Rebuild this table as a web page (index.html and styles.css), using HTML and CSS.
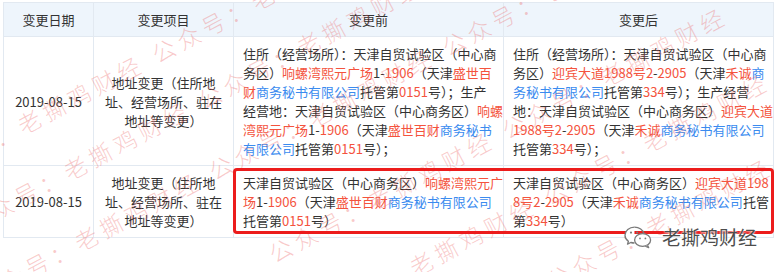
FILE: index.html
```html
<!DOCTYPE html>
<html lang="zh-CN">
<head>
<meta charset="utf-8">
<title>变更记录</title>
<link rel="stylesheet" href="styles.css">
</head>
<body>
<div class="page">
  <table class="chg">
    <colgroup>
      <col class="c1"><col class="c2"><col class="c3"><col class="c4">
    </colgroup>
    <thead>
      <tr><th>变更日期</th><th>变更项目</th><th>变更前</th><th>变更后</th></tr>
    </thead>
    <tbody>
      <tr class="row-a">
        <td class="mid">2019-08-15</td>
        <td class="mid">地址变更（住所地<br>址、经营场所、驻在<br>地址等变更）</td>
        <td class="txt">住所（经营场所）：天津自贸试验区（中心商<br>务区）<span class="r">响螺湾熙元广场</span>1-<span class="r">1906</span>（天津<span class="r">盛世百</span><br><span class="r">财</span><span class="b">商务秘书有限公司</span>托管第<span class="r">0151</span>号）；生产<br>经营地：天津自贸试验区（中心商务区）<span class="r">响螺</span><br><span class="r">湾熙元广场</span>1-<span class="r">1906</span>（天津<span class="r">盛世百财</span><span class="b">商务秘书</span><br><span class="b">有限公司</span>托管第<span class="r">0151</span>号）；</td>
        <td class="txt">住所（经营场所）：天津自贸试验区（中心商<br>务区）<span class="r">迎宾大道1988号2</span>-<span class="r">2905</span>（天津<span class="r">禾诚</span><span class="b">商</span><br><span class="b">务秘书有限公司</span>托管第<span class="r">334</span>号）；生产经营<br>地：天津自贸试验区（中心商务区）<span class="r">迎宾大道</span><br><span class="r">1988号2</span>-<span class="r">2905</span>（天津<span class="r">禾诚</span><span class="b">商务秘书有限公司</span><br>托管第<span class="r">334</span>号）；</td>
      </tr>
      <tr class="row-b">
        <td class="mid">2019-08-15</td>
        <td class="mid">地址变更（住所地<br>址、经营场所、驻在<br>地址等变更）</td>
        <td class="txt">天津自贸试验区（中心商务区）<span class="r">响螺湾熙元广</span><br><span class="r">场</span>1-<span class="r">1906</span>（天津<span class="r">盛世百财</span><span class="b">商务秘书有限公司</span><br>托管第<span class="r">0151</span>号）</td>
        <td class="txt">天津自贸试验区（中心商务区）<span class="r">迎宾大道198</span><br><span class="r">8号2</span>-<span class="r">2905</span>（天津<span class="r">禾诚</span><span class="b">商务秘书有限公司</span>托管<br>第<span class="r">334</span>号）</td>
      </tr>
    </tbody>
  </table>

  <div class="wm" aria-hidden="true">
    <span class="wl wl1"><span>公众号：老撕鸡财经</span><span>公众号：老撕鸡财经</span></span>
    <span class="wl wl2"><span>公众号：老撕鸡财经</span><span>公众号：老撕鸡财经</span></span>
    <span class="wl wl3"><span>公众号：老撕鸡财经</span><span>公众号：老撕鸡财经</span><span>公众号：老撕鸡财经</span></span>
    <span class="wl wl4"><span>公众号：老撕鸡财经</span><span>公众号：老撕鸡财经</span></span>
    <span class="wl wl5"><span>公众号：老撕鸡财经</span><span>公众号：老撕鸡财经</span></span>
    <span class="wl wl6"><span>公众号：老撕鸡财经</span></span>
  </div>

  <div class="hl-box"></div>

  <div class="brand">
    <svg class="wx" width="30" height="24" viewBox="0 0 30 24" aria-hidden="true">
      <path d="M11.5 2.2C6.2 2.2 2 5.8 2 10.2c0 2.5 1.3 4.6 3.4 6.1l-.9 2.9 3.3-1.7c1.1.3 2.3.5 3.6.5" fill="#fff" stroke="#7a7a7a" stroke-width="1.3" stroke-linejoin="round"/>
      <path d="M21 8.6c-.9-3.7-4.8-6.4-9.5-6.4" fill="none" stroke="#7a7a7a" stroke-width="1.3"/>
      <ellipse cx="19.6" cy="15" rx="8" ry="6.4" fill="#fff" stroke="#7a7a7a" stroke-width="1.3"/>
      <path d="M24.5 20.2l1.2 2.4-3.4-1.4" fill="#fff" stroke="#7a7a7a" stroke-width="1.2" stroke-linejoin="round"/>
      <circle cx="8" cy="7.6" r="1.1" fill="#7a7a7a"/>
      <circle cx="14.2" cy="7.6" r="1.1" fill="#7a7a7a"/>
      <circle cx="17" cy="13.4" r="0.9" fill="#7a7a7a"/>
      <circle cx="22.4" cy="13.4" r="0.9" fill="#7a7a7a"/>
    </svg>
    <span class="brand-name">老撕鸡财经</span>
  </div>
</div>
</body>
</html>
```
FILE: styles.css
```css
html, body {
  margin: 0;
  padding: 0;
  background: #fff;
}

.page {
  position: relative;
  width: 779px;
  height: 272px;
  overflow: hidden;
  box-sizing: border-box;
  padding: 2px 0 0 3px;
  font-family: "Noto Sans CJK SC", "Liberation Sans", sans-serif;
  font-size: 13px;
  color: #333;
}

.chg {
  border-collapse: collapse;
  table-layout: fixed;
  width: 770px;
}

.chg .c1 { width: 90px; }
.chg .c2 { width: 140px; }
.chg .c3 { width: 270px; }
.chg .c4 { width: 270px; }

.chg th,
.chg td {
  border: 1px solid #e2e9f1;
  font-weight: normal;
}

.chg th {
  background: #eef5fc;
  height: 33px;
  padding: 0;
  text-align: center;
  line-height: 19px;
}

.chg td {
  padding: 7px 8px 7px 9px;
  line-height: 19px;
  vertical-align: top;
  white-space: nowrap;
}

.chg td.mid {
  text-align: center;
  vertical-align: middle;
  padding-left: 4px;
  padding-right: 4px;
}

.r { color: #f4533d; }
.b { color: #3a8bef; }

/* watermark overlay */
.wm {
  position: absolute;
  inset: 0;
  pointer-events: none;
}

.wl {
  position: absolute;
  white-space: nowrap;
  font-size: 23px;
  font-weight: 300;
  line-height: 26px;
  letter-spacing: 5px;
  color: rgba(236, 100, 100, 0.34);
  transform: rotate(-28deg);
  transform-origin: 0 50%;
}

.wl > span {
  margin-right: 12px;
}

.wl1 { left: -80px; top: 166px; }
.wl2 { left: -34px; top: 212px; }
.wl3 { left: -23px; top: 283px; }
.wl4 { left: 270px; top: 242px; }
.wl5 { left: 312px; top: 308px; }
.wl6 { left: 548px; top: 269px; }

/* highlight box */
.hl-box {
  position: absolute;
  left: 233px;
  top: 168px;
  width: 541px;
  height: 66px;
  box-sizing: border-box;
  border: 3px solid #ec1c1c;
  border-radius: 4px;
}

/* brand mark */
.brand {
  position: absolute;
  left: 623px;
  top: 225px;
  display: flex;
  align-items: center;
  gap: 9px;
}

.brand-name {
  font-size: 19px;
  line-height: 24px;
  color: #4d4d4d;
  text-shadow: 0 0 2px #fff, 0 0 2px #fff;
}
```
